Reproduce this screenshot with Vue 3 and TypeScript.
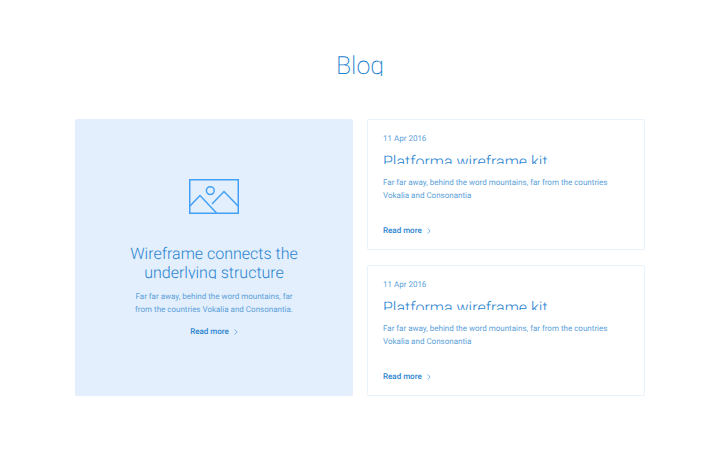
<script setup lang="ts">
interface Post {
  id: number
  date: string
  title: string
  excerpt: string
}

const posts: Post[] = [
  {
    id: 1,
    date: '11 Apr 2016',
    title: 'Platforma wireframe kit',
    excerpt: 'Far far away, behind the word mountains, far from the countries Vokalia and Consonantia',
  },
  {
    id: 2,
    date: '11 Apr 2016',
    title: 'Platforma wireframe kit',
    excerpt: 'Far far away, behind the word mountains, far from the countries Vokalia and Consonantia',
  },
]
</script>

<template>
  <main class="blog">
    <h1 class="heading">Blog</h1>
    <div class="grid">
      <article class="feature">
        <svg class="picture" viewBox="0 0 50 35" fill="none" aria-hidden="true">
          <rect x="0.75" y="0.75" width="48.5" height="33.5" />
          <circle cx="21.3" cy="11.6" r="3.9" />
          <path d="M1 27 11 16.500 27.500 34M23 25 35 12.500 49 27" />
        </svg>
        <h2 class="feature-title">Wireframe connects the underlying structure</h2>
        <p class="feature-text">Far far away, behind the word mountains, far from the countries Vokalia and Consonantia.</p>
        <a class="more" href="#">
          Read more
          <svg class="chevron" viewBox="0 0 4 6" fill="none" aria-hidden="true"><path d="M.6.4 3.200 3 .6 5.600" /></svg>
        </a>
      </article>
      <div class="list">
        <article v-for="post in posts" :key="post.id" class="card">
          <time class="date" datetime="2016-04-11">{{ post.date }}</time>
          <h2 class="card-title">{{ post.title }}</h2>
          <p class="card-text">{{ post.excerpt }}</p>
          <a class="more" href="#">
            Read more
            <svg class="chevron" viewBox="0 0 4 6" fill="none" aria-hidden="true"><path d="M.6.4 3.200 3 .6 5.600" /></svg>
          </a>
        </article>
      </div>
    </div>
  </main>
</template>

<style>
body {
  background: #fff;
}
</style>

<style scoped>
.blog {
  padding: 50px 75px 61px;
  font-family: Roboto, "Liberation Sans", sans-serif;
  font-size: 8px;
  line-height: 12px;
  color: #5c9fda;
  text-rendering: geometricPrecision;
}

h1,
h2,
p {
  margin: 0;
}

.heading {
  height: 26px;
  overflow: hidden;
  font-size: 25px;
  line-height: 34px;
  font-weight: 200;
  text-align: center;
  color: #2180ce;
}

.grid {
  display: grid;
  grid-template-columns: 1fr 1fr;
  gap: 14px;
  margin-top: 43px;
}

.feature {
  display: flex;
  flex-direction: column;
  align-items: center;
  padding: 60px 50px 57px;
  border-radius: 2px;
  background: #e3effc;
  text-align: center;
}

.picture {
  width: 50px;
  height: 35px;
  stroke: #42a1f6;
  stroke-width: 1.5;
}

.feature-title {
  max-height: 35px;
  overflow: hidden;
  margin-top: 30px;
  font-size: 16px;
  line-height: 19px;
  font-weight: 300;
  color: #2a84d0;
}

.feature-text {
  max-width: 170px;
  margin-top: 11px;
  line-height: 13px;
}

.more {
  display: inline-flex;
  align-items: center;
  gap: 5px;
  margin-top: 10px;
  font-weight: 500;
  color: #2a84d0;
  text-decoration: none;
}

.chevron {
  width: 4px;
  height: 6px;
  stroke: #5c9fda;
  stroke-width: 0.8;
}

.list {
  display: grid;
  gap: 15px;
}

.card {
  display: flex;
  flex-direction: column;
  align-items: flex-start;
  padding: 13px 15px 12px;
  border: 1px solid #e9f3fc;
  border-radius: 2px;
}

.card-title {
  height: 12px;
  overflow: hidden;
  margin-top: 7px;
  font-size: 16px;
  line-height: 19px;
  font-weight: 300;
  color: #2a84d0;
}

.card-text {
  margin-top: 12px;
  line-height: 13px;
}

.card .more {
  margin-top: 23px;
}
</style>
